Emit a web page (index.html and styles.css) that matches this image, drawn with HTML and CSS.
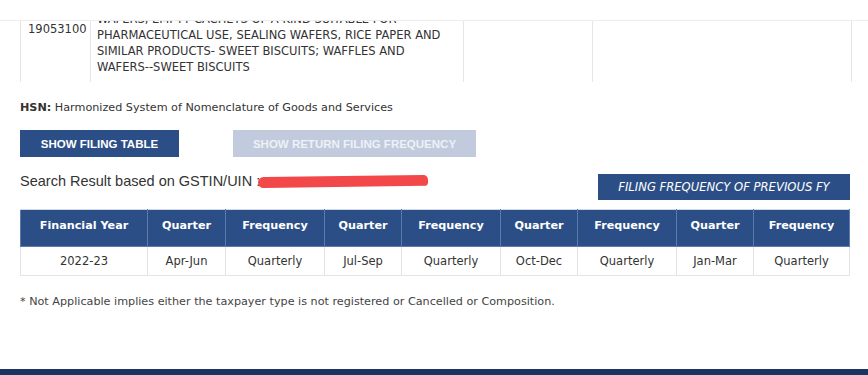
FILE: index.html
```html
<!DOCTYPE html>
<html lang="en">
    <head>
        <meta charset="UTF-8" />
        <meta name="viewport" content="width=device-width, initial-scale=1.0" />
        <title>Search Taxpayer</title>
        <link rel="stylesheet" href="styles.css">
    </head>
    <body>
        <div class="topbar"></div>
        <div class="page">
            <!-- HSN table, scrolled under the top bar -->
            <div class="hsn-clip">
                <table class="hsn">
                    <tr>
                        <td class="code">19053100</td>
                        <td class="desc">WAFERS, EMPTY CACHETS OF A KIND SUITABLE FOR<br>PHARMACEUTICAL USE, SEALING WAFERS, RICE PAPER AND<br>SIMILAR PRODUCTS- SWEET BISCUITS; WAFFLES AND<br>WAFERS--SWEET BISCUITS</td>
                        <td></td>
                        <td></td>
                    </tr>
                </table>
            </div>

            <p class="note"><b>HSN:</b> Harmonized System of Nomenclature of Goods and Services</p>

            <div class="btns">
                <button class="btn">SHOW FILING TABLE</button>
                <button class="btn disabled">SHOW RETURN FILING FREQUENCY</button>
            </div>

            <div class="result">
                <span class="result-text">Search Result based on GSTIN/UIN :<span class="scribble"></span></span>
                <button class="btn prev">FILING FREQUENCY OF PREVIOUS FY</button>
            </div>

            <table class="freq">
                <tr>
                    <th>Financial Year</th>
                    <th>Quarter</th>
                    <th>Frequency</th>
                    <th>Quarter</th>
                    <th>Frequency</th>
                    <th>Quarter</th>
                    <th>Frequency</th>
                    <th>Quarter</th>
                    <th>Frequency</th>
                </tr>
                <tr>
                    <td>2022-23</td>
                    <td>Apr-Jun</td>
                    <td>Quarterly</td>
                    <td>Jul-Sep</td>
                    <td>Quarterly</td>
                    <td>Oct-Dec</td>
                    <td>Quarterly</td>
                    <td>Jan-Mar</td>
                    <td>Quarterly</td>
                </tr>
            </table>

            <p class="foot-note">* Not Applicable implies either the taxpayer type is not registered or Cancelled or Composition.</p>
        </div>
        <div class="footer"></div>
    </body>
</html>
```

FILE: styles.css
```css
* {
    margin: 0px;
    padding: 0px;
    box-sizing: border-box;
}
body {
    width: 868px;
    height: 375px;
    overflow: hidden;
    background-color: white;
    color: #333;
    font-family: "DejaVu Sans", Verdana, sans-serif;
    display: flex;
    flex-direction: column;
}
.topbar {
    height: 21px;
    border-bottom: 1px solid #ececec;
    flex-shrink: 0;
}
.page {
    padding-left: 20px;
    flex: 1;
}

/* hsn table */
.hsn-clip {
    width: 832px;
    height: 61px;
    overflow: hidden;
}
.hsn {
    width: 832px;
    margin-top: -14px;
    border-collapse: collapse;
    font-size: 11.5px;
    line-height: 16px;
    color: #333;
}
.hsn td {
    border: 1px solid #e6e6e6;
    vertical-align: top;
}
.hsn .code {
    width: 70px;
    padding: 13px 0 0 7px;
}
.hsn .desc {
    width: 373px;
    padding: 3px 6px 7px 6px;
}
.hsn td:nth-child(3) {
    width: 129px;
}

.note {
    margin-top: 18px;
    font-size: 11.2px;
    line-height: 16px;
    color: #333;
}

/* buttons */
.btns {
    display: flex;
    gap: 54px;
    margin-top: 14px;
}
.btn {
    border: none;
    background-color: #2c4e86;
    color: white;
    font-family: "Liberation Sans", Arial, sans-serif;
    font-size: 11.5px;
    font-weight: bold;
    height: 27px;
    width: 159px;
}
.btn.disabled {
    width: 243px;
    background-color: #c1cbdd;
    color: #eef1f6;
}

.result {
    width: 830px;
    display: flex;
    justify-content: space-between;
    align-items: flex-start;
    margin-top: 15px;
}
.result-text {
    font-family: "Liberation Sans", Arial, sans-serif;
    font-size: 14.5px;
    line-height: 18px;
    color: #333;
}
.scribble {
    display: inline-block;
    width: 170px;
    height: 11px;
    margin-left: -2px;
    background-color: #f2484a;
    border-radius: 6px 5px 4px 6px;
    transform: rotate(-0.8deg);
    vertical-align: -1px;
}
.btn.prev {
    width: 252px;
    height: 26px;
    margin-top: 2px;
    font-family: "DejaVu Sans", Verdana, sans-serif;
    font-weight: normal;
    font-style: italic;
    font-size: 11.6px;
}

/* frequency table */
.freq {
    width: 830px;
    margin-top: 9px;
    border-collapse: collapse;
    font-size: 11.5px;
    text-align: center;
}
.freq th {
    height: 37px;
    padding-bottom: 6px;
    background-color: #2c4e86;
    color: white;
    font-size: 11.2px;
    font-weight: bold;
    border: 1px solid #5f7aa8;
    border-top-color: #d0d8e6;
}
.freq td {
    height: 29px;
    color: #333;
    border: 1px solid #e4e4e4;
}
.freq tr th:nth-child(1) { width: 127px; }
.freq tr th:nth-child(2) { width: 78px; }
.freq tr th:nth-child(3) { width: 99px; }
.freq tr th:nth-child(4) { width: 77px; }
.freq tr th:nth-child(5) { width: 99px; }
.freq tr th:nth-child(6) { width: 77px; }
.freq tr th:nth-child(7) { width: 99px; }
.freq tr th:nth-child(8) { width: 77px; }

.foot-note {
    margin-top: 18px;
    font-size: 11.2px;
    line-height: 16px;
    color: #444;
}

.footer {
    height: 6px;
    background-color: #1c3461;
    flex-shrink: 0;
}
```
